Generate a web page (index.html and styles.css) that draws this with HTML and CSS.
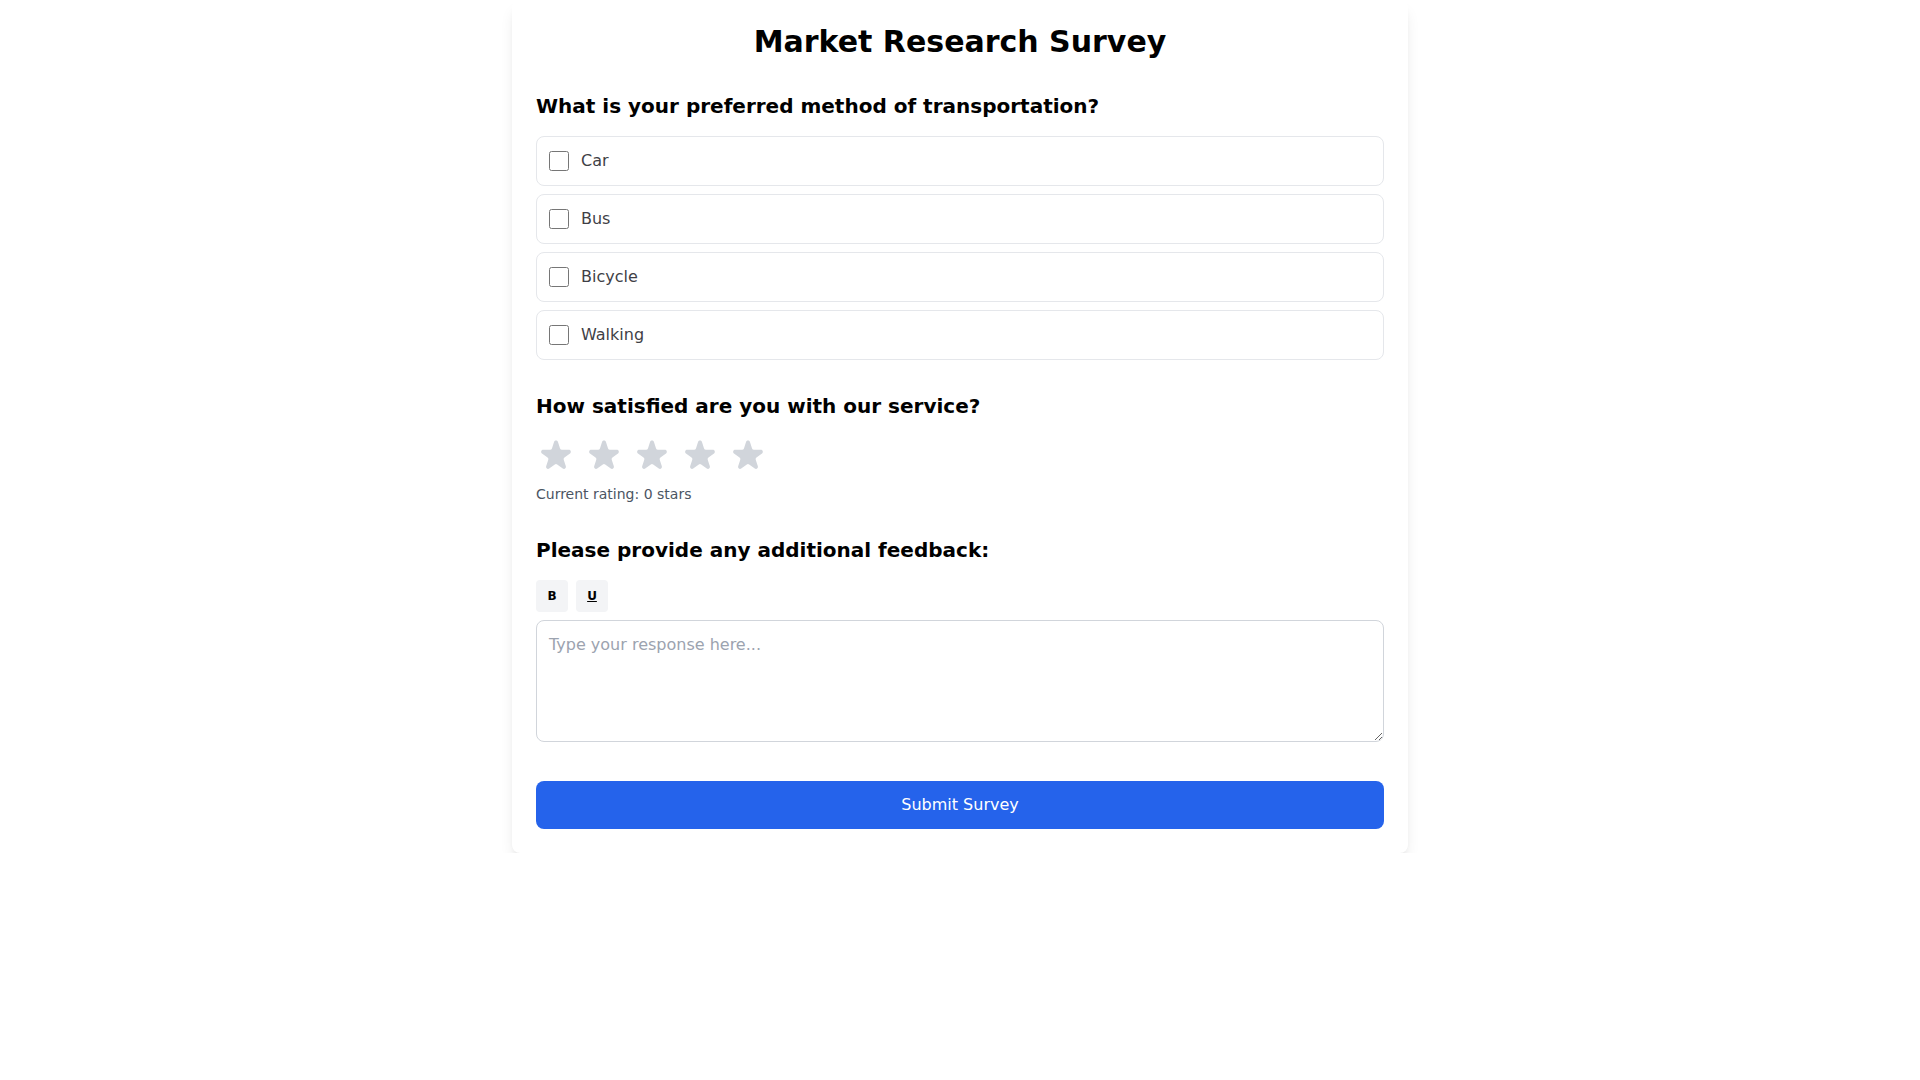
FILE: index.html
```html
<!DOCTYPE html>
<html lang="en">
<head>
<meta charset="utf-8">
<title>Market Research Survey</title>
<link rel="stylesheet" href="styles.css">
</head>
<body>
<div class="card">
  <h1 class="title">Market Research Survey</h1>

  <section class="section">
    <h2 class="question">What is your preferred method of transportation?</h2>
    <div class="options">
      <label class="option"><input type="checkbox" class="check"><span>Car</span></label>
      <label class="option"><input type="checkbox" class="check"><span>Bus</span></label>
      <label class="option"><input type="checkbox" class="check"><span>Bicycle</span></label>
      <label class="option"><input type="checkbox" class="check"><span>Walking</span></label>
    </div>
  </section>

  <section class="section">
    <h2 class="question">How satisfied are you with our service?</h2>
    <div class="stars">
      <svg class="star" viewBox="0 0 20 20"><path d="M9.049 2.927c.3-.921 1.603-.921 1.902 0l1.07 3.292a1 1 0 00.95.69h3.462c.969 0 1.371 1.24.588 1.81l-2.8 2.034a1 1 0 00-.364 1.118l1.07 3.292c.3.921-.755 1.688-1.54 1.118l-2.8-2.034a1 1 0 00-1.175 0l-2.8 2.034c-.784.57-1.838-.197-1.539-1.118l1.07-3.292a1 1 0 00-.364-1.118L2.98 8.72c-.783-.57-.38-1.81.588-1.81h3.461a1 1 0 00.951-.69l1.07-3.292z"/></svg>
      <svg class="star" viewBox="0 0 20 20"><path d="M9.049 2.927c.3-.921 1.603-.921 1.902 0l1.07 3.292a1 1 0 00.95.69h3.462c.969 0 1.371 1.24.588 1.81l-2.8 2.034a1 1 0 00-.364 1.118l1.07 3.292c.3.921-.755 1.688-1.54 1.118l-2.8-2.034a1 1 0 00-1.175 0l-2.8 2.034c-.784.57-1.838-.197-1.539-1.118l1.07-3.292a1 1 0 00-.364-1.118L2.98 8.72c-.783-.57-.38-1.81.588-1.81h3.461a1 1 0 00.951-.69l1.07-3.292z"/></svg>
      <svg class="star" viewBox="0 0 20 20"><path d="M9.049 2.927c.3-.921 1.603-.921 1.902 0l1.07 3.292a1 1 0 00.95.69h3.462c.969 0 1.371 1.24.588 1.81l-2.8 2.034a1 1 0 00-.364 1.118l1.07 3.292c.3.921-.755 1.688-1.54 1.118l-2.8-2.034a1 1 0 00-1.175 0l-2.8 2.034c-.784.57-1.838-.197-1.539-1.118l1.07-3.292a1 1 0 00-.364-1.118L2.98 8.72c-.783-.57-.38-1.81.588-1.81h3.461a1 1 0 00.951-.69l1.07-3.292z"/></svg>
      <svg class="star" viewBox="0 0 20 20"><path d="M9.049 2.927c.3-.921 1.603-.921 1.902 0l1.07 3.292a1 1 0 00.95.69h3.462c.969 0 1.371 1.24.588 1.81l-2.8 2.034a1 1 0 00-.364 1.118l1.07 3.292c.3.921-.755 1.688-1.54 1.118l-2.8-2.034a1 1 0 00-1.175 0l-2.8 2.034c-.784.57-1.838-.197-1.539-1.118l1.07-3.292a1 1 0 00-.364-1.118L2.98 8.72c-.783-.57-.38-1.81.588-1.81h3.461a1 1 0 00.951-.69l1.07-3.292z"/></svg>
      <svg class="star" viewBox="0 0 20 20"><path d="M9.049 2.927c.3-.921 1.603-.921 1.902 0l1.07 3.292a1 1 0 00.95.69h3.462c.969 0 1.371 1.24.588 1.81l-2.8 2.034a1 1 0 00-.364 1.118l1.07 3.292c.3.921-.755 1.688-1.54 1.118l-2.8-2.034a1 1 0 00-1.175 0l-2.8 2.034c-.784.57-1.838-.197-1.539-1.118l1.07-3.292a1 1 0 00-.364-1.118L2.98 8.72c-.783-.57-.38-1.81.588-1.81h3.461a1 1 0 00.951-.69l1.07-3.292z"/></svg>
    </div>
    <p class="rating">Current rating: 0 stars</p>
  </section>

  <section class="section section-last">
    <h2 class="question">Please provide any additional feedback:</h2>
    <div class="toolbar">
      <button class="tool tool-b" type="button">B</button>
      <button class="tool tool-u" type="button">U</button>
    </div>
    <textarea class="response" rows="4" placeholder="Type your response here..."></textarea>
  </section>

  <button class="submit" type="button">Submit Survey</button>
</div>
</body>
</html>
```
FILE: styles.css
```css
* { box-sizing: border-box; }

html, body {
  margin: 0;
  padding: 0;
  background: #ffffff;
}

body {
  font-family: "DejaVu Sans", sans-serif;
  color: #000;
}

.card {
  width: 896px;
  margin: 0 auto;
  padding: 24px;
  background: #fff;
  border-radius: 8px;
  box-shadow: 0 10px 15px -3px rgba(0,0,0,0.1), 0 4px 6px -4px rgba(0,0,0,0.1);
}

.title {
  margin: 0 0 32px;
  font-size: 30px;
  line-height: 36px;
  font-weight: 700;
  text-align: center;
}

.section {
  margin-bottom: 32px;
}

.section-last {
  margin-bottom: 39px;
}

.question {
  margin: 0 0 16px;
  font-size: 20px;
  line-height: 28px;
  font-weight: 700;
}

.options {
  display: flex;
  flex-direction: column;
  gap: 8px;
}

.option {
  display: flex;
  align-items: center;
  padding: 12px;
  border: 1px solid #e5e7eb;
  border-radius: 8px;
  font-size: 16px;
  line-height: 24px;
  color: #3f3f46;
}

.check {
  width: 20px;
  height: 20px;
  margin: 0 12px 0 0;
  flex: none;
}

.stars {
  display: flex;
  gap: 8px;
}

.star {
  width: 40px;
  height: 40px;
  fill: #d1d5db;
  display: block;
}

.rating {
  margin: 8px 0 0;
  font-size: 14px;
  line-height: 20px;
  color: #4b5563;
}

.toolbar {
  display: flex;
  gap: 8px;
  margin-bottom: 8px;
}

.tool {
  width: 32px;
  height: 32px;
  padding: 0;
  border: none;
  border-radius: 4px;
  background: #f3f4f6;
  font-family: "DejaVu Sans", sans-serif;
  font-size: 12px;
  font-weight: 700;
  color: #000;
}

.tool-u {
  text-decoration: underline;
}

.response {
  display: block;
  width: 100%;
  height: 122px;
  margin: 0;
  padding: 12px;
  border: 1px solid #d1d5db;
  border-radius: 8px;
  font-family: "DejaVu Sans", sans-serif;
  font-size: 16px;
  line-height: 24px;
  color: #111827;
  resize: vertical;
}

.response::placeholder {
  color: #9ca3af;
}

.submit {
  display: block;
  width: 100%;
  height: 48px;
  padding: 12px;
  border: none;
  border-radius: 8px;
  background: #2563eb;
  color: #fff;
  font-family: "DejaVu Sans", sans-serif;
  font-size: 16px;
  line-height: 24px;
}
```
